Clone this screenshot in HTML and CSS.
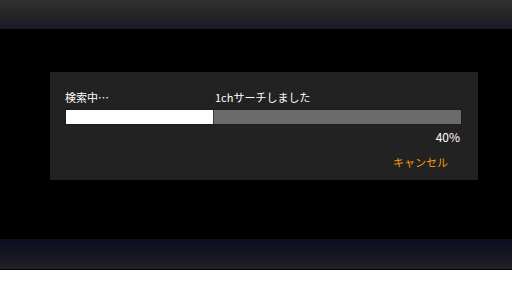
FILE: index.html
```html
<!DOCTYPE html>
<html lang="ja">
<head>
<meta charset="utf-8">
<link rel="stylesheet" href="styles.css">
</head>
<body>
<div class="screen">
  <div class="topbar"></div>
  <div class="main">
    <div class="dialog">
      <div class="labels">
        <span class="status">検索中…</span>
        <span class="detail">1chサーチしました</span>
      </div>
      <div class="bar"><div class="fill" style="width:147px"></div></div>
      <div class="percent">40%</div>
      <div class="actions"><span class="cancel">キャンセル</span></div>
    </div>
  </div>
  <div class="bottombar"></div>
</div>
</body>
</html>
```
FILE: styles.css
```css
html, body {
  margin: 0;
  padding: 0;
  background: #ffffff;
}
.screen {
  width: 512px;
  display: flex;
  flex-direction: column;
  font-family: "Noto Sans CJK JP", "Noto Sans", sans-serif;
}
.topbar {
  height: 29px;
  background: linear-gradient(to bottom, #303030 0%, #262628 50%, #19192c 100%);
}
.main {
  height: 210px;
  background: #000000;
  padding-top: 43px;
  box-sizing: border-box;
}
.bottombar {
  height: 31px;
  box-sizing: border-box;
  border-bottom: 1px solid #000;
  background: linear-gradient(to bottom, #0b0d22 0%, #141522 50%, #222224 100%);
}
.dialog {
  margin-left: 50px;
  width: 428px;
  height: 108px;
  box-sizing: border-box;
  background: #222222;
  padding: 17px 16px 0 15px;
  color: #ffffff;
  font-size: 11px;
  line-height: 16px;
}
.labels {
  display: flex;
}
.status {
  width: 150px;
}
.bar {
  margin-top: 4px;
  height: 16px;
  background: #6b6b6b;
  box-sizing: border-box;
  border: 1px solid #1c1c1c;
  display: flex;
}
.fill {
  height: 100%;
  background: #ffffff;
  border-right: 1px solid #3a3a3a;
}
.percent {
  margin-top: 4px;
  text-align: right;
  padding-right: 2px;
  font-size: 12px;
}
.actions {
  margin-top: 9px;
  display: flex;
  justify-content: flex-end;
  padding-right: 14px;
}
.cancel {
  color: #f29a10;
}
```
